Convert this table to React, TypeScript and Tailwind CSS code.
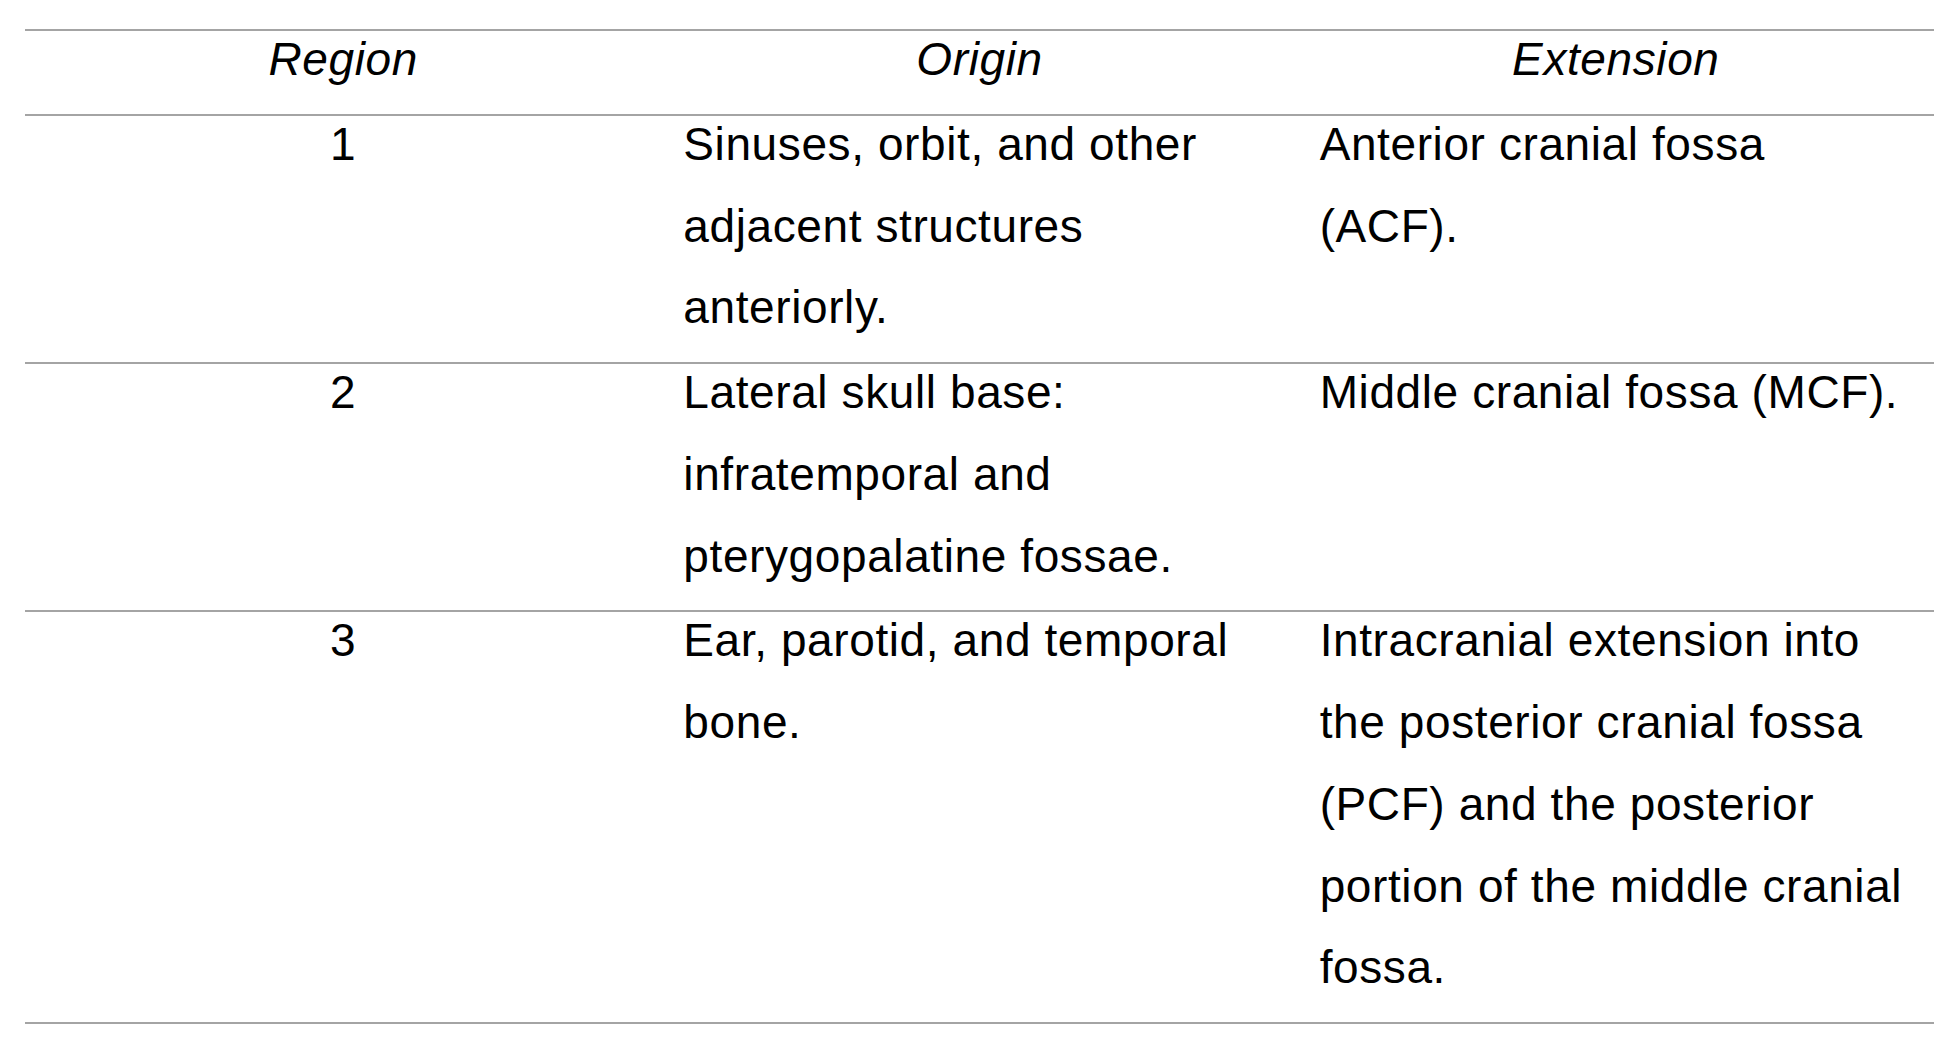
import React from "react";

type Row = { region: string; origin: string; extension: string };

const rows: Row[] = [
  {
    region: "1",
    origin: "Sinuses, orbit, and other adjacent structures anteriorly.",
    extension: "Anterior cranial fossa (ACF).",
  },
  {
    region: "2",
    origin: "Lateral skull base: infratemporal and pterygopalatine fossae.",
    extension: "Middle cranial fossa (MCF).",
  },
  {
    region: "3",
    origin: "Ear, parotid, and temporal bone.",
    extension:
      "Intracranial extension into the posterior cranial fossa (PCF) and the posterior portion of the middle cranial fossa.",
  },
];

function Cell({
  children,
  center,
  italic,
}: {
  children: React.ReactNode;
  center?: boolean;
  italic?: boolean;
}) {
  return (
    <div className={`px-[22px] pb-[13px] ${center ? "text-center" : "text-left"} ${italic ? "italic" : ""}`}>
      <div className="-mt-[12px]">{children}</div>
    </div>
  );
}

export default function App() {
  return (
    <div
      className="min-h-[1048px] w-[1956px] bg-white pt-[29px] pl-[25px] text-black"
      style={{ fontFamily: '"Liberation Sans", Arial, sans-serif' }}
    >
      <div className="w-[1909px] border-b-2 border-[#a4a4a4] text-[46px] leading-[81.75px] tracking-[0.6px]">
        <div className="grid grid-cols-3 border-t-2 border-[#a4a4a4]">
          <Cell center italic>Region</Cell>
          <Cell center italic>Origin</Cell>
          <Cell center italic>Extension</Cell>
        </div>
        {rows.map((r) => (
          <div key={r.region} className="grid grid-cols-3 border-t-2 border-[#a4a4a4]">
            <Cell center>{r.region}</Cell>
            <Cell>{r.origin}</Cell>
            <Cell>{r.extension}</Cell>
          </div>
        ))}
      </div>
    </div>
  );
}
